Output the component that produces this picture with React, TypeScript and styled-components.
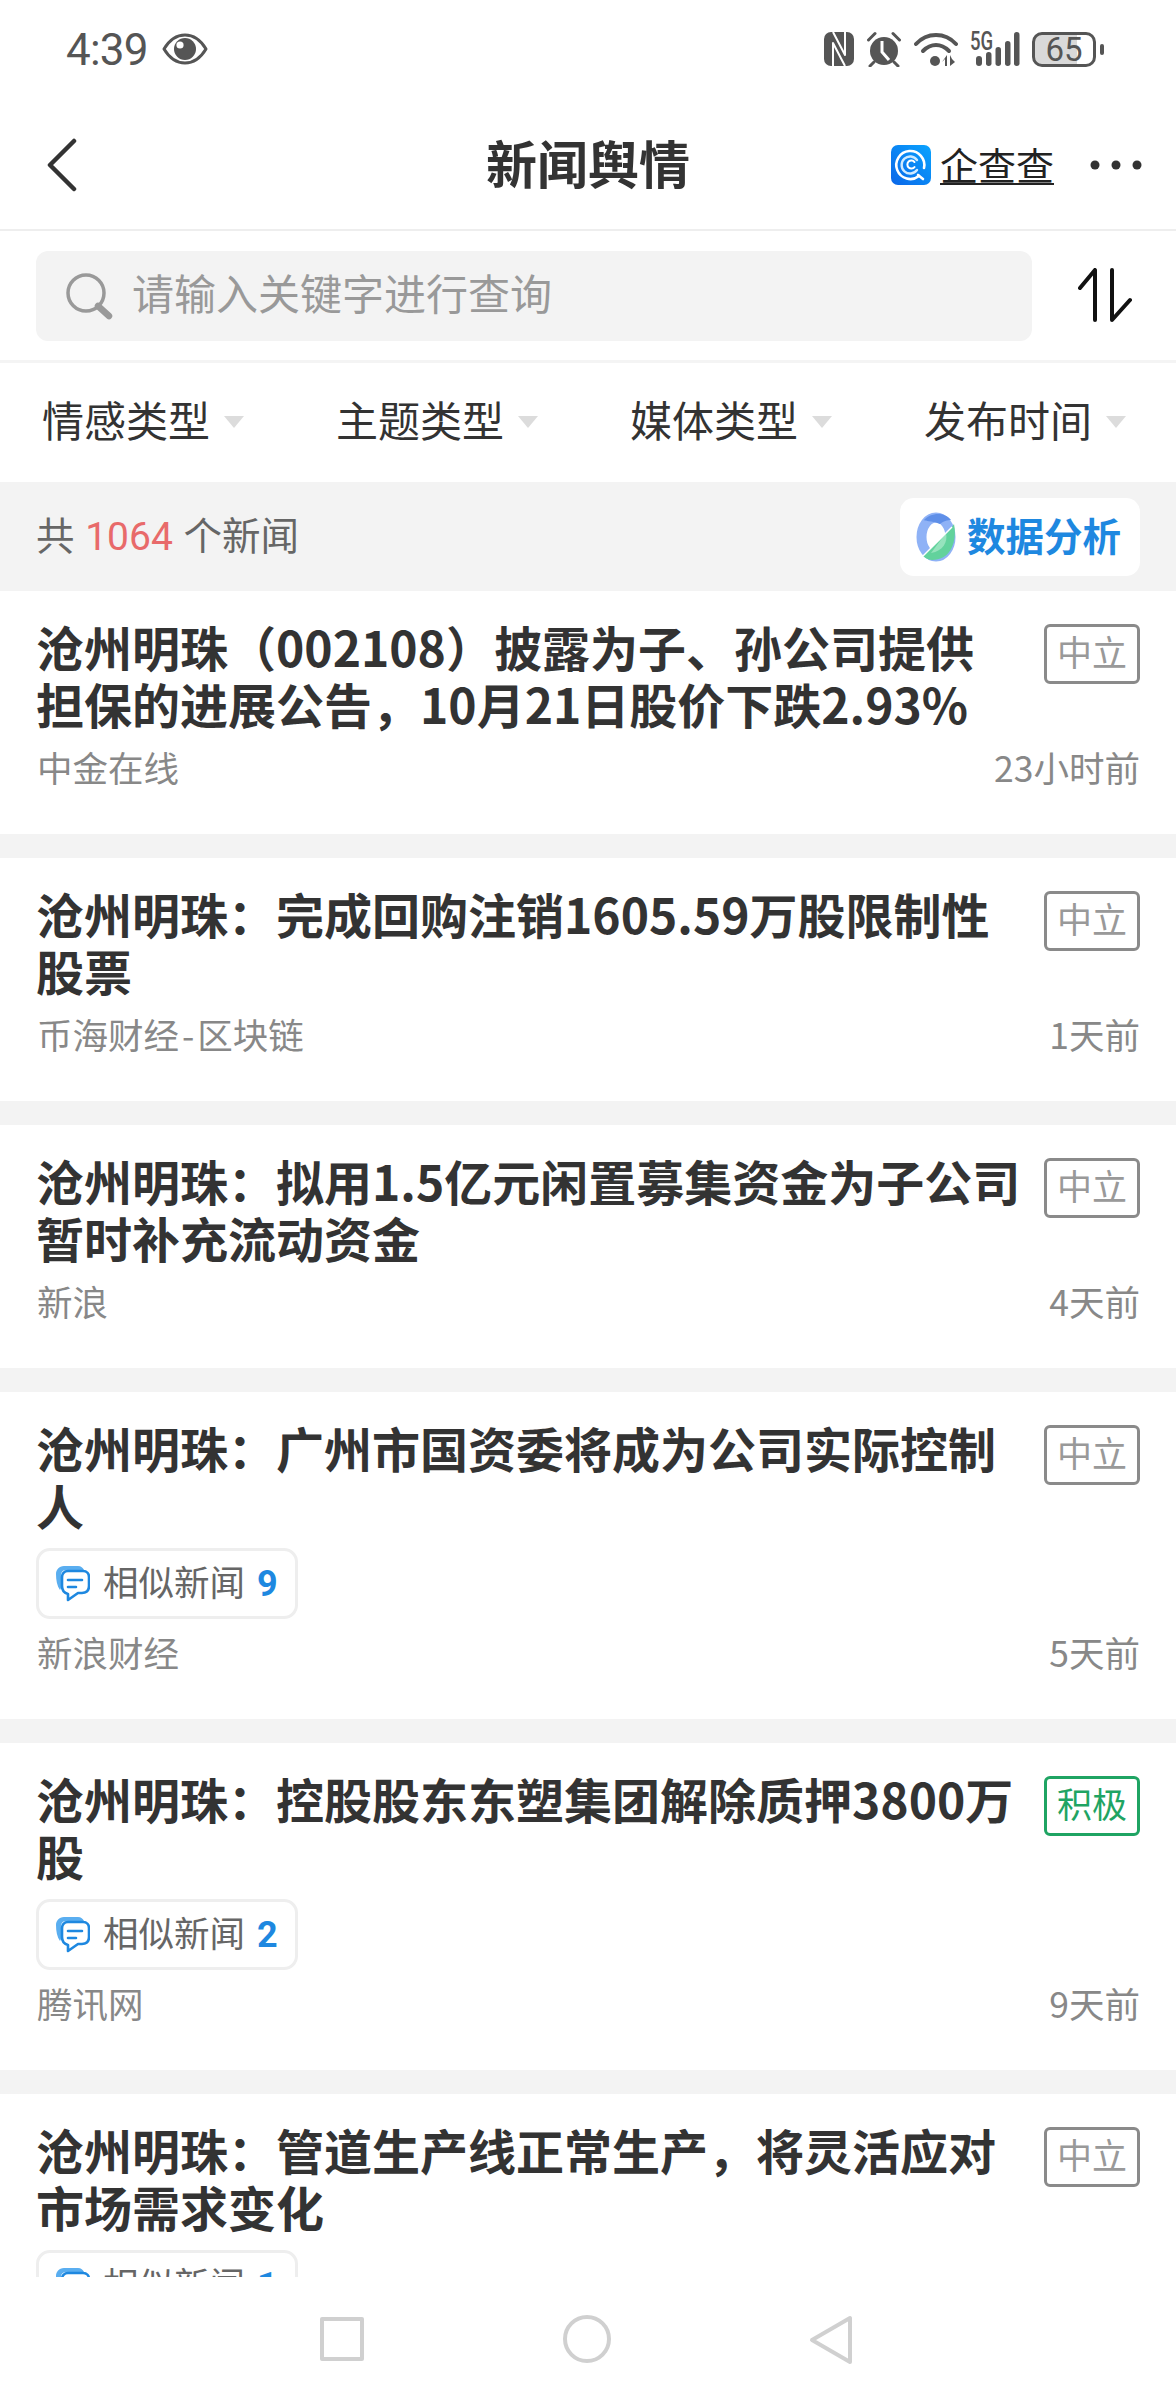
import React from 'react';
import styled, { createGlobalStyle } from 'styled-components';

const GlobalStyle = createGlobalStyle`
  html, body {
    margin: 0;
    padding: 0;
    background: #fff;
  }
  body {
    font-family: 'Noto Sans CJK SC', 'Roboto', sans-serif;
  }
`;

const Screen = styled.div`
  width: 1176px;
  height: 2400px;
  display: flex;
  flex-direction: column;
  overflow: hidden;
  background: #fff;
`;

const StatusBar = styled.div`
  height: 100px;
  box-sizing: border-box;
  padding: 31px 72px 0 66px;
  display: flex;
  align-items: flex-start;
  justify-content: space-between;
  flex-shrink: 0;
`;

const StatusLeft = styled.div`
  display: flex;
  align-items: center;
  gap: 14px;
  height: 36px;
`;

const Clock = styled.span`
  margin-top: 2px;
  font-family: 'Roboto', sans-serif;
  font-size: 44px;
  line-height: 36px;
  color: #555;
  letter-spacing: -0.8px;
`;

const StatusRight = styled.div`
  display: flex;
  align-items: center;
  gap: 12px;
  height: 36px;
`;

const SignalBox = styled.div`
  position: relative;
  width: 50px;
  height: 34px;
`;

const FiveG = styled.span`
  position: absolute;
  left: 0;
  top: -1px;
  font-family: 'Roboto', sans-serif;
  font-size: 25px;
  line-height: 21px;
  font-weight: 500;
  color: #555;
  transform: scaleX(0.74);
  transform-origin: left center;
`;

const BatteryWrap = styled.div`
  display: flex;
  align-items: center;
  gap: 4px;
`;

const BatteryBody = styled.div<{ $level: number }>`
  width: 64px;
  height: 35px;
  box-sizing: border-box;
  border: 3px solid #555;
  border-radius: 10px;
  background: linear-gradient(
    to right,
    #d9d9d9 ${(p) => p.$level}%,
    #fff ${(p) => p.$level}%
  );
  font-family: 'Roboto', sans-serif;
  font-size: 33px;
  line-height: 29px;
  color: #555;
  text-align: center;
`;

const BatteryTip = styled.div`
  width: 4px;
  height: 11px;
  border-radius: 2px;
  background: #555;
`;

const Header = styled.div`
  position: relative;
  height: 131px;
  box-sizing: border-box;
  border-bottom: 2px solid #eee;
  padding: 0 34px 0 46px;
  display: flex;
  align-items: center;
  justify-content: space-between;
  flex-shrink: 0;
`;

const Title = styled.div`
  position: absolute;
  left: 0;
  right: 0;
  padding-bottom: 6px;
  text-align: center;
  font-size: 51px;
  font-weight: 700;
  color: #333;
  line-height: 60px;
`;

const HeaderRight = styled.div`
  position: relative;
  display: flex;
  align-items: center;
`;

const Brand = styled.span`
  margin-left: 9px;
  margin-right: 36px;
  font-size: 38px;
  line-height: 38px;
  color: #222;
  border-bottom: 2px solid #222;
  height: 38px;
  white-space: nowrap;
`;

const SearchRow = styled.div`
  height: 132px;
  box-sizing: border-box;
  border-bottom: 3px solid #f4f4f4;
  padding: 20px 44px 0 36px;
  display: flex;
  align-items: flex-start;
  justify-content: space-between;
  flex-shrink: 0;
`;

const SearchBox = styled.div`
  width: 996px;
  height: 90px;
  box-sizing: border-box;
  border-radius: 12px;
  background: #f3f3f3;
  padding-left: 29px;
  display: flex;
  align-items: center;
  gap: 19px;
`;

const Placeholder = styled.span`
  margin-bottom: 9px;
  font-size: 42px;
  color: #999;
  line-height: 50px;
  white-space: nowrap;
`;

const SortButton = styled.div`
  padding-top: 17px;
`;

const FilterBar = styled.div`
  height: 118px;
  display: grid;
  grid-template-columns: repeat(4, 294px);
  align-items: center;
  flex-shrink: 0;
`;

const Filter = styled.div`
  padding-left: 42px;
  display: flex;
  align-items: center;
  gap: 14px;
  color: #333;
  white-space: nowrap;
`;

const FilterLabel = styled.span`
  margin-bottom: 6px;
  font-size: 42px;
  line-height: 50px;
`;

const Caret = styled.i`
  width: 0;
  height: 0;
  border-left: 10px solid transparent;
  border-right: 10px solid transparent;
  border-top: 12px solid #dcdcdc;
`;

const CountBar = styled.div`
  height: 109px;
  margin-top: 1px;
  box-sizing: border-box;
  background: #f3f3f3;
  padding: 0 36px;
  display: flex;
  align-items: center;
  justify-content: space-between;
  flex-shrink: 0;
`;

const CountText = styled.div`
  margin-bottom: 7px;
  font-size: 38.5px;
  color: #666;
  white-space: pre;
`;

const CountNumber = styled.span`
  margin: 0 2px;
  font-family: 'Roboto', sans-serif;
  font-size: 39px;
  color: #e86a6a;
`;

const AnalysisButton = styled.div`
  width: 240px;
  height: 78px;
  box-sizing: border-box;
  background: #fff;
  border-radius: 14px;
  padding-left: 16px;
  display: flex;
  align-items: center;
  gap: 11px;
  color: #1e88e0;
  white-space: nowrap;
`;

const AnalysisLabel = styled.span`
  margin-bottom: 6px;
  font-size: 38.5px;
  font-weight: 700;
`;

const NewsList = styled.div`
  flex: 1;
  min-height: 0;
  overflow: hidden;
  background: #f3f3f3;
`;

const NewsItem = styled.article`
  box-sizing: border-box;
  background: #fff;
  padding: 27px 36px 42px;
  margin-bottom: 24px;
`;

const NewsHead = styled.div`
  display: flex;
  align-items: flex-start;
  justify-content: space-between;
`;

const NewsTitle = styled.h3`
  margin: 0;
  width: 1000px;
  font-size: 48px;
  line-height: 57px;
  font-weight: 700;
  color: #333;
  white-space: pre-line;
`;

const Tag = styled.span<{ $positive?: boolean }>`
  width: 96px;
  height: 60px;
  box-sizing: border-box;
  margin-top: 6px;
  flex-shrink: 0;
  border-radius: 6px;
  border: 3px solid ${(p) => (p.$positive ? '#1fa463' : '#8a8a8a')};
  background: #fff;
  color: ${(p) => (p.$positive ? '#1fa463' : '#999')};
  font-size: 35px;
  line-height: 47px;
  text-align: center;
  white-space: nowrap;
`;

const SimilarPill = styled.div`
  width: 262px;
  height: 71px;
  box-sizing: border-box;
  margin: 15px 0 -2px;
  border: 3px solid #eee;
  border-radius: 14px;
  padding-left: 17px;
  display: flex;
  align-items: center;
  color: #666;
  white-space: nowrap;
`;

const SimilarLabel = styled.span`
  margin: 0 0 6px 13px;
  font-size: 35.5px;
`;

const SimilarCount = styled.span`
  margin-left: 12px;
  font-family: 'Roboto', sans-serif;
  font-size: 36px;
  font-weight: 700;
  color: #1e88e0;
`;

const Meta = styled.div`
  margin-top: 10px;
  padding-left: 1px;
  display: flex;
  justify-content: space-between;
  font-size: 35.5px;
  line-height: 50px;
  color: #888;
`;

const SourceDash = styled.span`
  margin: 0 3px;
`;

const NavBar = styled.div`
  height: 123px;
  flex-shrink: 0;
  background: #fff;
  padding: 38px 323px 0 320px;
  box-sizing: border-box;
  display: flex;
  align-items: flex-start;
  justify-content: space-between;
`;

const NavSquare = styled.div`
  width: 44px;
  height: 44px;
  margin-top: 2px;
  box-sizing: border-box;
  border: 4px solid #d0d0d0;
  border-radius: 2px;
`;

const NavCircle = styled.div`
  width: 48px;
  height: 48px;
  box-sizing: border-box;
  border: 4px solid #d0d0d0;
  border-radius: 50%;
`;

const EyeIcon = () => (
  <svg width="46" height="32" viewBox="0 0 46 32">
    <path d="M2 16C8 6 15 2 23 2s15 4 21 14c-6 10-13 14-21 14S8 26 2 16z" fill="none" stroke="#555" strokeWidth="3" strokeLinejoin="round" />
    <circle cx="23" cy="16" r="11" fill="#555" />
    <circle cx="18" cy="12" r="3.6" fill="#fff" />
  </svg>
);

const NfcIcon = () => (
  <svg width="30" height="36" viewBox="0 0 30 36">
    <rect x="0" y="1" width="30" height="34" rx="7" fill="#555" />
    <path d="M9 35V12l12 23" fill="none" stroke="#fff" strokeWidth="2" strokeLinejoin="round" />
    <path d="M21 1v23L9 1" fill="none" stroke="#fff" strokeWidth="2" strokeLinejoin="round" />
  </svg>
);

const AlarmIcon = () => (
  <svg width="36" height="36" viewBox="0 0 36 36">
    <circle cx="18" cy="20" r="14" fill="#555" />
    <path d="M16 10v11l7 8" fill="none" stroke="#fff" strokeWidth="3" />
    <path d="M2.5 9 9 2.500M33.5 9 27 2.500M8 31l-4 4M28 31l4 4" fill="none" stroke="#555" strokeWidth="3" strokeLinecap="round" />
  </svg>
);

const WifiIcon = () => (
  <svg width="44" height="36" viewBox="0 0 44 36">
    <path d="M2 13C13 1 31 1 42 13" fill="none" stroke="#555" strokeWidth="4" strokeLinecap="round" />
    <path d="M9 20c8-8 18-8 26 0" fill="none" stroke="#555" strokeWidth="4" strokeLinecap="round" />
    <circle cx="21" cy="30" r="5" fill="#555" />
    <path d="M33 24v11h-2v-7l-3 3zM36 24v11l5-4-3-3z" fill="#555" />
  </svg>
);

const SignalBars = () => (
  <svg width="50" height="34" viewBox="0 0 50 34" style={{ position: 'absolute', left: 0, top: 0 }}>
    <rect x="6" y="24" width="6" height="10" rx="3" fill="#555" />
    <rect x="16" y="20" width="5.5" height="14" rx="2.7" fill="#555" />
    <rect x="25.5" y="15" width="5.5" height="19" rx="2.7" fill="#555" />
    <rect x="35" y="9" width="5.5" height="25" rx="2.7" fill="#555" />
    <rect x="44" y="0" width="5.5" height="34" rx="2.7" fill="#555" />
  </svg>
);

const BackIcon = () => (
  <svg width="32" height="54" viewBox="0 0 32 54">
    <path d="M28 3 4 27l24 24" fill="none" stroke="#333" strokeWidth="4.5" strokeLinecap="round" strokeLinejoin="round" />
  </svg>
);

const BrandLogo = () => (
  <svg width="40" height="40" viewBox="0 0 40 40">
    <defs>
      <linearGradient id="brandBg" x1="0" y1="1" x2="1" y2="0">
        <stop offset="0" stopColor="#0a66e8" />
        <stop offset="1" stopColor="#0aa4ff" />
      </linearGradient>
    </defs>
    <rect width="40" height="40" rx="7" fill="url(#brandBg)" />
    <path d="M28 31a14 14 0 1 1 5-8" fill="none" stroke="#fff" strokeWidth="2.6" strokeLinecap="round" />
    <path d="M26 25a8.5 8.5 0 1 1 0-10" fill="none" stroke="#cfeaff" strokeWidth="2.4" strokeLinecap="round" />
    <path d="M23.500 22a4 4 0 1 1 0-5" fill="none" stroke="#fff" strokeWidth="2" strokeLinecap="round" />
    <path d="m27 30 5 4" fill="none" stroke="#fff" strokeWidth="2.6" strokeLinecap="round" />
  </svg>
);

const DotsIcon = () => (
  <svg width="52" height="12" viewBox="0 0 52 12">
    <circle cx="5" cy="6" r="4.5" fill="#333" />
    <circle cx="26" cy="6" r="4.5" fill="#333" />
    <circle cx="47" cy="6" r="4.5" fill="#333" />
  </svg>
);

const SearchIcon = () => (
  <svg width="48" height="48" viewBox="0 0 48 48">
    <circle cx="21" cy="21" r="18" fill="none" stroke="#999" strokeWidth="3.5" />
    <path d="m33 34 11 10" fill="none" stroke="#999" strokeWidth="6.5" strokeLinecap="round" />
  </svg>
);

const SortIcon = () => (
  <svg width="54" height="54" viewBox="0 0 54 54">
    <path d="M2 20 17 2v50" fill="none" stroke="#111" strokeWidth="4" strokeLinecap="round" strokeLinejoin="round" />
    <path d="M34 2v50l18-20" fill="none" stroke="#111" strokeWidth="4" strokeLinecap="round" strokeLinejoin="round" />
  </svg>
);

const AnalysisLogo = () => (
  <svg width="40" height="50" viewBox="0 0 40 50">
    <ellipse cx="20" cy="25" rx="14.500" ry="19.500" fill="none" stroke="#8fb2f6" strokeWidth="10" />
    <path d="M8 8c6-7 20-9 27 0 0 0-7 0-11 4C14 8 10 10 8 8z" fill="#5f8fe8" />
    <path d="M38 12c3 14-1 36-22 36-4 0-8-3-9-4L31 21c3-3 5-6 7-9z" fill="#62d29c" />
    <path d="M30 21c2 9-3 18-15 20z" fill="#96e3bd" />
    <path d="M5 46 36 15" stroke="#fff" strokeWidth="1.500" />
  </svg>
);

const ChatIcon = () => (
  <svg width="34" height="36" viewBox="0 0 34 36">
    <path d="M4 24C1 20 0 14 0 8c0-4 3-8 8-8h14c3 0 5 2 6 4H10c-4 0-5 3-5 6v12z" fill="#5aaef0" />
    <path d="M12 5h15c4 0 6 3 6 6v9c0 5-3 7-7 7h-4l-10 7v-6c-4-1-6-4-6-8v-9c0-3 2-6 6-6z" fill="#fff" stroke="#1e88e0" strokeWidth="2.6" strokeLinejoin="round" />
    <path d="M12 14h14M12 21h8" stroke="#1e88e0" strokeWidth="2.6" strokeLinecap="round" />
  </svg>
);

const NavBack = () => (
  <svg width="44" height="50" viewBox="0 0 44 50">
    <path d="M41 3v44L3 25z" fill="none" stroke="#d0d0d0" strokeWidth="4" strokeLinejoin="round" />
  </svg>
);

type NewsEntry = {
  title: string;
  source: React.ReactNode;
  time: string;
  positive?: boolean;
  similar?: number;
};

const filters = ['情感类型', '主题类型', '媒体类型', '发布时间'];

const news: NewsEntry[] = [
  { title: '沧州明珠（002108）披露为子、孙公司提供\n担保的进展公告，10月21日股价下跌2.93%', source: '中金在线', time: '23小时前' },
  {
    title: '沧州明珠：完成回购注销1605.59万股限制性\n股票',
    source: (
      <>
        币海财经<SourceDash>-</SourceDash>区块链
      </>
    ),
    time: '1天前',
  },
  { title: '沧州明珠：拟用1.5亿元闲置募集资金为子公司\n暂时补充流动资金', source: '新浪', time: '4天前' },
  { title: '沧州明珠：广州市国资委将成为公司实际控制\n人', source: '新浪财经', time: '5天前', similar: 9 },
  { title: '沧州明珠：控股股东东塑集团解除质押3800万\n股', source: '腾讯网', time: '9天前', positive: true, similar: 2 },
  { title: '沧州明珠：管道生产线正常生产，将灵活应对\n市场需求变化', source: '', time: '', similar: 1 },
];

const App: React.FC = () => {
  return (
    <>
      <GlobalStyle />
      <Screen>
        <StatusBar>
          <StatusLeft>
            <Clock>4:39</Clock>
            <EyeIcon />
          </StatusLeft>
          <StatusRight>
            <NfcIcon />
            <AlarmIcon />
            <WifiIcon />
            <SignalBox>
              <FiveG>5G</FiveG>
              <SignalBars />
            </SignalBox>
            <BatteryWrap>
              <BatteryBody $level={72}>65</BatteryBody>
              <BatteryTip />
            </BatteryWrap>
          </StatusRight>
        </StatusBar>

        <Header>
          <BackIcon />
          <Title>新闻舆情</Title>
          <HeaderRight>
            <BrandLogo />
            <Brand>企查查</Brand>
            <DotsIcon />
          </HeaderRight>
        </Header>

        <SearchRow>
          <SearchBox>
            <SearchIcon />
            <Placeholder>请输入关键字进行查询</Placeholder>
          </SearchBox>
          <SortButton>
            <SortIcon />
          </SortButton>
        </SearchRow>

        <FilterBar>
          {filters.map((name) => (
            <Filter key={name}>
              <FilterLabel>{name}</FilterLabel>
              <Caret />
            </Filter>
          ))}
        </FilterBar>

        <CountBar>
          <CountText>
            共 <CountNumber>1064</CountNumber> 个新闻
          </CountText>
          <AnalysisButton>
            <AnalysisLogo />
            <AnalysisLabel>数据分析</AnalysisLabel>
          </AnalysisButton>
        </CountBar>

        <NewsList>
          {news.map((item) => (
            <NewsItem key={item.title}>
              <NewsHead>
                <NewsTitle>{item.title}</NewsTitle>
                <Tag $positive={item.positive}>{item.positive ? '积极' : '中立'}</Tag>
              </NewsHead>
              {item.similar !== undefined && (
                <SimilarPill>
                  <ChatIcon />
                  <SimilarLabel>相似新闻</SimilarLabel>
                  <SimilarCount>{item.similar}</SimilarCount>
                </SimilarPill>
              )}
              <Meta>
                <span>{item.source}</span>
                <span>{item.time}</span>
              </Meta>
            </NewsItem>
          ))}
        </NewsList>

        <NavBar>
          <NavSquare />
          <NavCircle />
          <NavBack />
        </NavBar>
      </Screen>
    </>
  );
};

export default App;
